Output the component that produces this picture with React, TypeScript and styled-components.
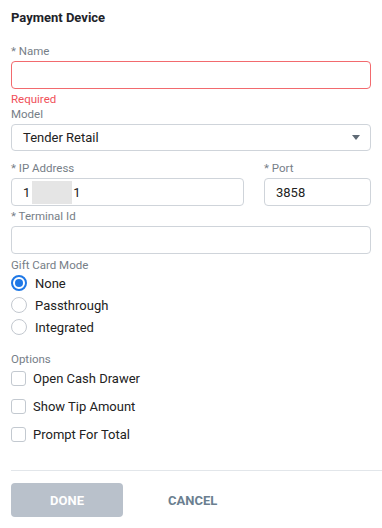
import React from "react";
import styled, { createGlobalStyle } from "styled-components";

const Global = createGlobalStyle`
  body {
    margin: 0;
    background: #fff;
    font-family: Roboto, "Liberation Sans", Arial, sans-serif;
  }
`;

const Page = styled.div`
  width: 382px;
  height: 528px;
  padding-left: 11px;
  box-sizing: border-box;
  overflow: hidden;
`;

const Form = styled.div`
  padding-right: 11px;
`;

const Title = styled.h2`
  margin: 0;
  padding-top: 10px;
  font-size: 13px;
  line-height: 16px;
  font-weight: 700;
  color: #1e2329;
`;

const Field = styled.div<{ $top: number }>`
  margin-top: ${(p) => p.$top}px;
  display: flex;
  flex-direction: column;
`;

const Label = styled.label<{ $after?: number }>`
  font-size: 11.5px;
  line-height: 14px;
  color: #767e87;
  margin-bottom: ${(p) => (p.$after ?? 3)}px;
`;

const Input = styled.div<{ $error?: boolean }>`
  height: 28px;
  box-sizing: border-box;
  border: 1px solid ${(p) => (p.$error ? "#f26a6e" : "#cfd4da")};
  border-radius: 4px;
  display: flex;
  align-items: center;
  padding: 0 11px;
  font-size: 13px;
  color: #222;
`;

const Redact = styled.span`
  display: inline-block;
  width: 40px;
  height: 23px;
  background: #e5e5e5;
  margin: 0 1px 0 2px;
`;

const Select = styled(Input)`
  height: 27px;
  justify-content: space-between;
  padding-right: 10px;
`;

const Caret = styled.span`
  width: 0;
  height: 0;
  border-left: 4.5px solid transparent;
  border-right: 4.5px solid transparent;
  border-top: 5px solid #5f6a75;
`;

const ErrorText = styled.div`
  margin-top: 3px;
  font-size: 11.5px;
  line-height: 14px;
  color: #f0505a;
`;

const Row = styled.div`
  display: grid;
  grid-template-columns: 1fr 107px;
  column-gap: 20px;
  margin-top: 10px;
`;

const Group = styled.div`
  display: flex;
  flex-direction: column;
`;

const RadioRow = styled.div`
  height: 22px;
  display: flex;
  align-items: center;
  gap: 8px;
  font-size: 13px;
  color: #222;
`;

const RadioDot = styled.span<{ $on?: boolean }>`
  width: 16px;
  height: 16px;
  box-sizing: border-box;
  border-radius: 50%;
  border: ${(p) => (p.$on ? "2px solid #1f78e6" : "1.5px solid #c3c8cf")};
  display: flex;
  align-items: center;
  justify-content: center;
  &::after {
    content: "";
    width: 8px;
    height: 8px;
    border-radius: 50%;
    background: ${(p) => (p.$on ? "#1f78e6" : "transparent")};
  }
`;

const CheckRow = styled.div`
  height: 28px;
  display: flex;
  align-items: center;
  gap: 7px;
  font-size: 13px;
  color: #222;
`;

const Box = styled.span`
  width: 15px;
  height: 15px;
  box-sizing: border-box;
  border: 1.5px solid #c3c9d0;
  border-radius: 3px;
`;

const Divider = styled.hr`
  margin: 22px 0 0;
  border: 0;
  border-top: 1px solid #e2e6ea;
`;

const Footer = styled.div`
  display: flex;
  align-items: center;
  gap: 45px;
  margin-top: 12px;
`;

const Button = styled.button<{ $primary?: boolean }>`
  height: 34px;
  width: ${(p) => (p.$primary ? "112px" : "auto")};
  border: 0;
  border-radius: 4px;
  background: ${(p) => (p.$primary ? "#b9c1cb" : "transparent")};
  color: ${(p) => (p.$primary ? "#fff" : "#6b7f90")};
  font-family: inherit;
  font-size: 13px;
  font-weight: 700;
  padding: 0;
`;

export default function App() {
  return (
    <Page>
      <Global />
      <Form>
        <Title>Payment Device</Title>

        <Field $top={18}>
          <Label>* Name</Label>
          <Input $error />
          <ErrorText>Required</ErrorText>
        </Field>

        <Field $top={1}>
          <Label>Model</Label>
          <Select>
            <span>Tender Retail</span>
            <Caret />
          </Select>
        </Field>

        <Row>
          <Group>
            <Label>* IP Address</Label>
            <Input>
              1<Redact />1
            </Input>
          </Group>
          <Group>
            <Label>* Port</Label>
            <Input>3858</Input>
          </Group>
        </Row>

        <Field $top={3}>
          <Label>* Terminal Id</Label>
          <Input />
        </Field>

        <Field $top={4}>
          <Label $after={0}>Gift Card Mode</Label>
          <RadioRow>
            <RadioDot $on />
            None
          </RadioRow>
          <RadioRow>
            <RadioDot />
            Passthrough
          </RadioRow>
          <RadioRow>
            <RadioDot />
            Integrated
          </RadioRow>
        </Field>

        <Field $top={14}>
          <Label $after={-2}>Options</Label>
          <CheckRow>
            <Box />
            Open Cash Drawer
          </CheckRow>
          <CheckRow>
            <Box />
            Show Tip Amount
          </CheckRow>
          <CheckRow>
            <Box />
            Prompt For Total
          </CheckRow>
        </Field>
      </Form>

      <Divider />

      <Footer>
        <Button $primary>DONE</Button>
        <Button>CANCEL</Button>
      </Footer>
    </Page>
  );
}
